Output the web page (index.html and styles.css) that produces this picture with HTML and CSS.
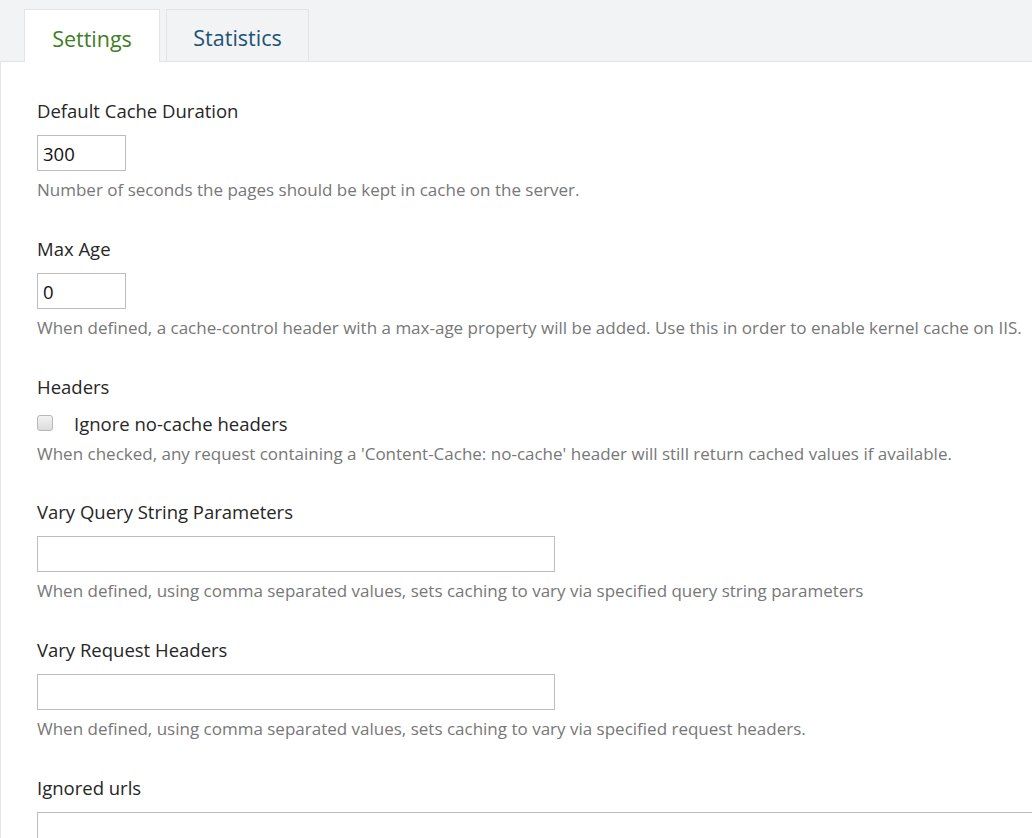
FILE: index.html
```html
<!DOCTYPE html>
<html>
<head>
<meta charset="utf-8">
<link rel="stylesheet" href="styles.css">
</head>
<body>
<div class="tabs">
  <div class="tab active">Settings</div>
  <div class="tab">Statistics</div>
</div>
<div class="panel">
  <div class="group">
    <label class="label">Default Cache Duration</label>
    <input class="input small" type="text" value="300">
    <div class="help">Number of seconds the pages should be kept in cache on the server.</div>
  </div>
  <div class="group">
    <label class="label">Max Age</label>
    <input class="input small" type="text" value="0">
    <div class="help">When defined, a cache-control header with a max-age property will be added. Use this in order to enable kernel cache on IIS.</div>
  </div>
  <div class="group headers">
    <label class="label">Headers</label>
    <div class="check-row"><span class="checkbox"></span><span class="check-label">Ignore no-cache headers</span></div>
    <div class="help">When checked, any request containing a 'Content-Cache: no-cache' header will still return cached values if available.</div>
  </div>
  <div class="group">
    <label class="label">Vary Query String Parameters</label>
    <input class="input wide" type="text" value="">
    <div class="help">When defined, using comma separated values, sets caching to vary via specified query string parameters</div>
  </div>
  <div class="group">
    <label class="label">Vary Request Headers</label>
    <input class="input wide" type="text" value="">
    <div class="help">When defined, using comma separated values, sets caching to vary via specified request headers.</div>
  </div>
  <div class="group">
    <label class="label">Ignored urls</label>
    <textarea class="textarea"></textarea>
  </div>
</div>
</body>
</html>
```
FILE: styles.css
```css
html, body {
  margin: 0;
  padding: 0;
  background: #f2f3f5;
  font-family: "Open Sans", "Noto Sans", sans-serif;
  overflow: hidden;
  height: 838px;
}
.tabs {
  display: flex;
  align-items: flex-start;
  gap: 6px;
  padding: 9px 0 0 24px;
  height: 61px;
  box-sizing: border-box;
  position: relative;
  z-index: 1;
}
.tab {
  border: 1px solid #e1e3e6;
  border-bottom: none;
  height: 52px;
  box-sizing: border-box;
  display: flex;
  align-items: center;
  justify-content: center;
  font-size: 21.5px;
  color: #1d5274;
  padding-top: 4px;
  flex: none;
}
.tab.active {
  width: 136px;
  background: #fff;
  color: #3f7d26;
  height: 53px;
}
.tab:not(.active) {
  width: 143px;
  background: #f2f3f5;
}
.panel {
  background: #fff;
  border-top: 1px solid #e1e3e6;
  border-left: 1px solid #e6e6e6;
  padding: 37px 0 0 36px;
  height: 777px;
  box-sizing: border-box;
  overflow: hidden;
}
.group {
  margin-bottom: 35px;
}
.group.headers { margin-bottom: 34px; }
.label {
  display: block;
  font-size: 18.5px;
  color: #262626;
  line-height: 24px;
  margin-bottom: 12px;
}
.input {
  display: block;
  height: 36px;
  box-sizing: border-box;
  border: 1px solid #bdbdbd;
  border-radius: 0;
  font-family: inherit;
  font-size: 18.5px;
  color: #111;
  padding: 0 5px;
  margin: 0;
  outline: none;
}
.small { width: 89px; }
.wide { width: 518px; }
.help {
  font-size: 17px;
  color: #777;
  line-height: 24px;
  margin-top: 7px;
  white-space: nowrap;
}
.check-row {
  display: flex;
  align-items: center;
  height: 26px;
  margin-top: 11px;
}
.headers .label { margin-bottom: 0; }
.checkbox {
  width: 14px;
  height: 14px;
  border: 1px solid #b8b8b8;
  border-radius: 3px;
  background: linear-gradient(#f2f2f2, #dcdcdc);
  margin-right: 21px;
  flex: none;
}
.check-label {
  font-size: 18.5px;
  color: #262626;
}
.headers .help { margin-top: 6px; }
.textarea {
  display: block;
  width: 1100px;
  height: 80px;
  border: 1px solid #bdbdbd;
  margin: 0;
  resize: none;
}
```
